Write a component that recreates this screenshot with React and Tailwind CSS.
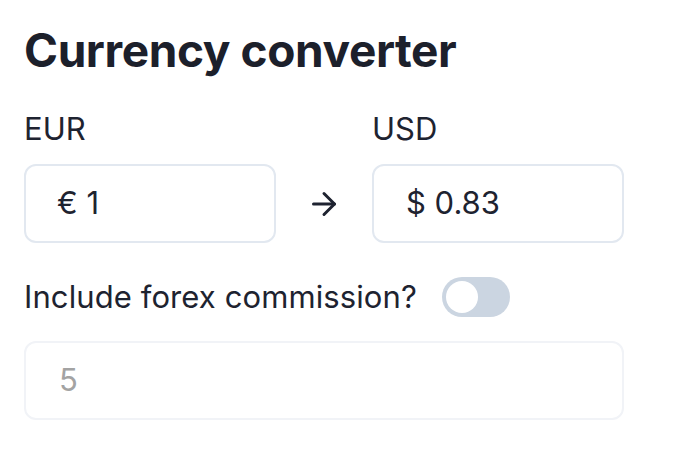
import React from "react";

export default function App() {
  return (
    <div className="w-[680px] h-[468px] bg-white text-[#1e2330] px-6 pt-[21px]" style={{ fontFamily: "Inter, 'Liberation Sans', sans-serif" }}>
      <div className="w-[600px]">
        <h1 className="text-[46px] leading-[58px] font-bold tracking-[-0.4px] text-[#1c202b]">Currency converter</h1>
        <div className="grid grid-cols-[252px_96px_252px] mt-[30px]">
          <label className="text-[31px] leading-[40px] text-[#1e2330]">EUR</label>
          <div />
          <label className="text-[31px] leading-[40px] text-[#1e2330]">USD</label>
          <div className="mt-[15px] h-[79px] rounded-[12px] border-2 border-[#e2e8f0] flex items-center px-[31px] text-[31px]">€ 1</div>
          <div className="mt-[15px] flex items-center justify-center">
            <svg width="36" height="36" viewBox="0 0 24 24" fill="none" stroke="#1e2330" strokeWidth="2" strokeLinecap="round" strokeLinejoin="round">
              <path d="M5 12h14" />
              <path d="m12 5 7 7-7 7" />
            </svg>
          </div>
          <div className="mt-[15px] h-[79px] rounded-[12px] border-2 border-[#e2e8f0] flex items-center px-[32px] text-[31px]">$ 0.83</div>
        </div>
        <div className="flex items-center gap-[25px] mt-[34px]">
          <span className="text-[31px] leading-[40px] tracking-[0.1px]">Include forex commission?</span>
          <div className="w-[68px] h-[40px] rounded-full bg-[#cbd5e1] p-[4px] flex items-center">
            <div className="w-[32px] h-[32px] rounded-full bg-white" />
          </div>
        </div>
        <div className="mt-[24px] h-[79px] rounded-[12px] border-2 border-[#f1f3f7] flex items-center px-[33px] text-[31px] text-[#a3a3a3]">5</div>
      </div>
    </div>
  );
}
